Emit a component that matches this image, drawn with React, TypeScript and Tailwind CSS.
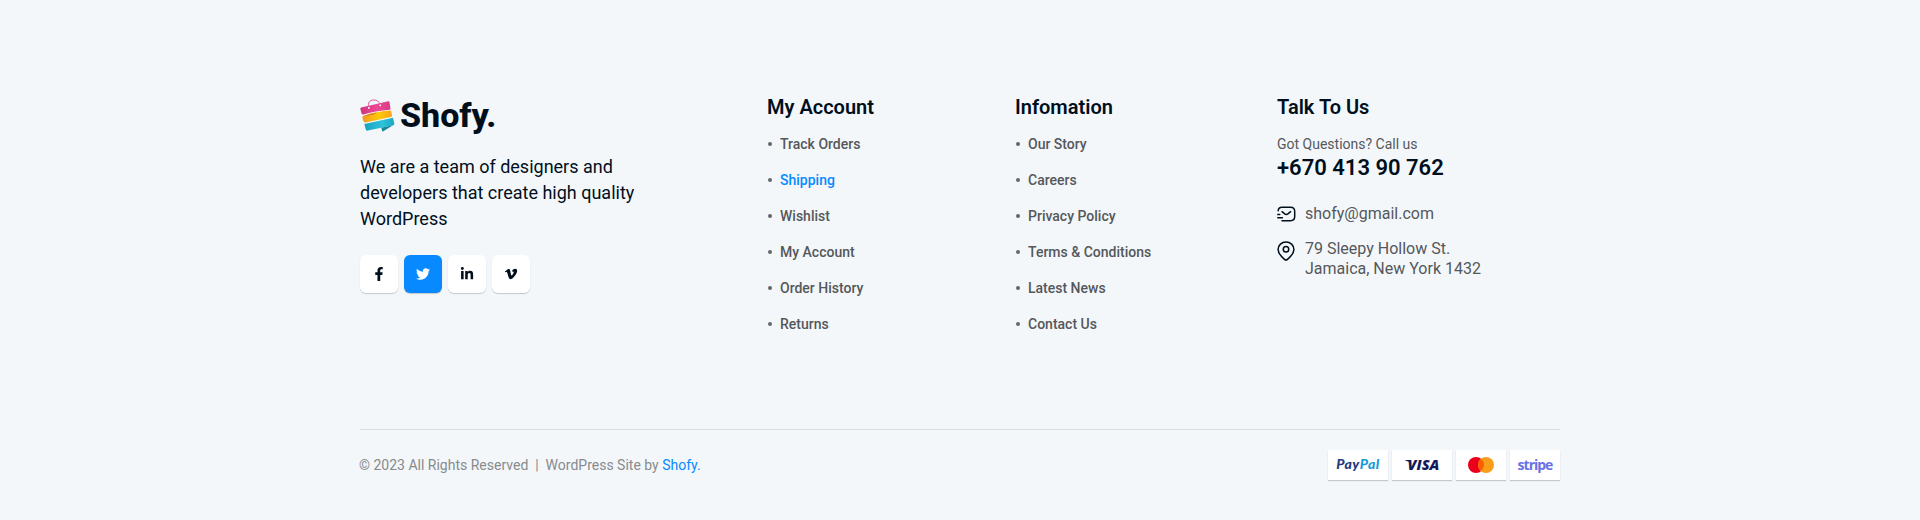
import React from "react";
import { FaFacebookF, FaTwitter, FaLinkedinIn, FaVimeoV } from "react-icons/fa";

const account = ["Track Orders", "Shipping", "Wishlist", "My Account", "Order History", "Returns"];
const information = ["Our Story", "Careers", "Privacy Policy", "Terms & Conditions", "Latest News", "Contact Us"];

const socials = [
  { name: "Facebook", Icon: FaFacebookF },
  { name: "Twitter", Icon: FaTwitter },
  { name: "LinkedIn", Icon: FaLinkedinIn },
  { name: "Vimeo", Icon: FaVimeoV },
];

function BagLogo() {
  return (
    <svg className="mt-1" width="36" height="34" viewBox="0 0 36 34" aria-hidden="true">
      <defs>
        <linearGradient id="pink" x1="0" y1="0" x2="1" y2="0">
          <stop offset="0" stopColor="#cf3580" />
          <stop offset=".55" stopColor="#ec4893" />
          <stop offset="1" stopColor="#dc3a84" />
        </linearGradient>
        <linearGradient id="gold" x1="0" y1="0" x2="1" y2="0">
          <stop offset="0" stopColor="#f39a1e" />
          <stop offset=".55" stopColor="#ffca08" />
          <stop offset="1" stopColor="#f9a31b" />
        </linearGradient>
        <linearGradient id="aqua" x1="0" y1="0" x2="1" y2="0">
          <stop offset="0" stopColor="#18a3bf" />
          <stop offset=".6" stopColor="#2fc2da" />
          <stop offset="1" stopColor="#1aa7c2" />
        </linearGradient>
      </defs>
      <path d="M.3 9.800Q.2 8.700 1.200 8.400L28.200 2.300Q29.300 2.100 29.500 3.200L30.500 9.600Q30.600 10.600 29.600 10.800C20 11.400 12 13 3.500 15.400Q1.800 15.800 1.500 14.400Z" fill="url(#pink)" />
      <path d="M8.800 8.600C7.600 3.600 9.600 1.200 13.200 1c3.700-.2 6 1.400 6.900 4.900" fill="none" stroke="#e0599a" strokeWidth="1" />
      <circle cx="8.900" cy="8.900" r=".9" fill="#fff" />
      <circle cx="20.200" cy="6.300" r=".9" fill="#fff" />
      <path d="M2.300 18.500Q2.200 17.400 3.600 16.900C12 14 21 12 31 11.600L32 16.400Q32.200 17.600 31 17.900L5.600 23.400Q3.900 23.700 3.500 22.300Z" fill="url(#gold)" />
      <path d="M2.400 18Q2.600 17.200 3.600 16.900Q10 14.700 17 13.300L14 15.500Z" fill="#dd8420" />
      <path d="M4.300 24.900L33 18.800L34.300 24.800Q34.500 26 33.300 26.300L8 31.600Q6.200 31.900 5.800 30.400Z" fill="url(#aqua)" />
      <path d="M21.200 28.700L33 26.300L22.500 32.800Z" fill="#16889c" />
    </svg>
  );
}

function MailIcon() {
  return (
    <svg width="19" height="17" viewBox="0 0 19 17" fill="none" stroke="#010f1c" strokeWidth="1.500" strokeLinecap="round" strokeLinejoin="round" aria-hidden="true">
      <path d="M1.200 4.800C1.400 2.200 2.800 1.300 5 1.300h8.500c2.800 0 4.200 1.300 4.200 4.100v5.200c0 2.800-1.400 4.100-4.200 4.100H5" />
      <path d="M13.600 5.700l-2.700 2.200c-.900.700-2.300.700-3.200 0L5 5.700M.800 11.700h4.600M.800 8.400h2" />
    </svg>
  );
}

function PinIcon() {
  return (
    <svg className="mt-[2px]" width="18" height="20" viewBox="0 0 18 20" fill="none" stroke="#010f1c" strokeWidth="1.500" aria-hidden="true">
      <path d="M9 1C4.600 1 1.100 4.200 1.100 8.500c0 4.400 4 7.700 6.400 9.900.9.800 2.100.8 3 0 2.400-2.200 6.400-5.500 6.400-9.900C16.900 4.200 13.400 1 9 1Z" />
      <circle cx="9" cy="8.300" r="2.750" />
    </svg>
  );
}

function LinkColumn({ title, links, active }: { title: string; links: string[]; active?: string }) {
  return (
    <nav>
      <h4 className="text-[20px] leading-6 font-semibold">{title}</h4>
      <ul className="mt-[15px] flex flex-col gap-4 text-[14px] leading-5 font-medium text-[#55585b]">
        {links.map((link) => (
          <li key={link} className="flex items-center">
            <span className="mr-[8.500px] ml-[.5px] size-1 rounded-full bg-[#65686b]" />
            <a className={link === active ? "text-[#0989ff]" : ""}>{link}</a>
          </li>
        ))}
      </ul>
    </nav>
  );
}

const card = "flex h-[30px] items-center justify-center bg-white shadow-[0_1px_1px_rgba(1,15,28,0.2)]";

export default function App() {
  return (
    <footer className="h-[520px] bg-[#f3f7fa] pt-[95px] font-['Roboto',sans-serif] text-[#010f1c]">
      <div className="mx-auto w-[1200px]">
        <div className="grid h-[334px] grid-cols-[407px_248px_262px_1fr]">
          <section>
            <div className="flex h-10 items-start gap-[4px]">
              <BagLogo />
              <span className="text-[34px] leading-10 font-extrabold">Shofy.</span>
            </div>
            <p className="mt-[19px] w-[290px] text-[18px] leading-[26px]">
              We are a team of designers and developers that create high quality WordPress
            </p>
            <div className="mt-[23px] flex gap-1.5">
              {socials.map(({ name, Icon }) => (
                <a
                  key={name}
                  aria-label={name}
                  className={
                    name === "Twitter"
                      ? "flex size-[38px] items-center justify-center rounded-md bg-[#0989ff] text-white shadow-[0_1px_1px_rgba(1,15,28,0.2)]"
                      : "flex size-[38px] items-center justify-center rounded-md bg-white shadow-[0_1px_1px_rgba(1,15,28,0.2)]"
                  }
                >
                  <Icon size={14} />
                </a>
              ))}
            </div>
          </section>

          <LinkColumn title="My Account" links={account} active="Shipping" />
          <LinkColumn title="Infomation" links={information} />

          <section>
            <h4 className="text-[20px] leading-6 font-semibold">Talk To Us</h4>
            <div className="mt-[15px] text-[14px] leading-5 text-[#55585b]">Got Questions? Call us</div>
            <div className="mt-px text-[22px] leading-[26px] font-semibold">+670 413 90 762</div>
            <div className="mt-[23px] flex items-center gap-[9px] text-[16px] leading-5 text-[#55585b]">
              <MailIcon />
              <span>shofy@gmail.com</span>
            </div>
            <div className="mt-[15px] flex items-start gap-[10px] text-[16px] leading-5 text-[#55585b]">
              <PinIcon />
              <span>
                79 Sleepy Hollow St.
                <br />
                Jamaica, New York 1432
              </span>
            </div>
          </section>
        </div>

        <div className="flex items-start justify-between border-t border-[#d9dde1] pt-5">
          <p className="mt-[5px] -ml-px text-[14px] leading-5 whitespace-pre text-[#888b8e]">
            {"© 2023 All Rights Reserved  |  WordPress Site by "}
            <span className="text-[#0989ff]">Shofy.</span>
          </p>
          <div className="flex gap-1">
            <div className={`${card} w-[60px]`}>
              <span className="-mt-0.5 font-['Lato',sans-serif] text-[14px] leading-4 font-black tracking-[0.5px] italic text-[#253b80]">
                Pay<span className="text-[#179bd7]">Pal</span>
              </span>
            </div>
            <div className={`${card} w-[60px]`}>
              <span className="relative pl-[3px] font-['Open_Sans',sans-serif] text-[14.5px] leading-4 font-extrabold italic text-[#15195a]">
                VISA
                <svg className="absolute top-[2.5px] left-0" width="7" height="4" viewBox="0 0 7 4" aria-hidden="true">
                  <path d="M.3 0H4.500L6.500 4Q4 1.200 .3.600Z" fill="#15195a" />
                </svg>
              </span>
            </div>
            <div className={`${card} w-[50px]`}>
              <svg width="26" height="16" viewBox="0 0 26 16" aria-hidden="true">
                <circle cx="8" cy="8" r="8" fill="#eb001b" />
                <circle cx="18" cy="8" r="8" fill="#f79e1b" />
                <path d="M13 1.750a8 8 0 0 1 0 12.500a8 8 0 0 1 0-12.500Z" fill="#ff5f00" />
              </svg>
            </div>
            <div className={`${card} w-[50px]`}>
              <span className="font-['Open_Sans',sans-serif] text-[14px] leading-4 font-bold tracking-[-1px] text-[#6772e5]">stripe</span>
            </div>
          </div>
        </div>
      </div>
    </footer>
  );
}
